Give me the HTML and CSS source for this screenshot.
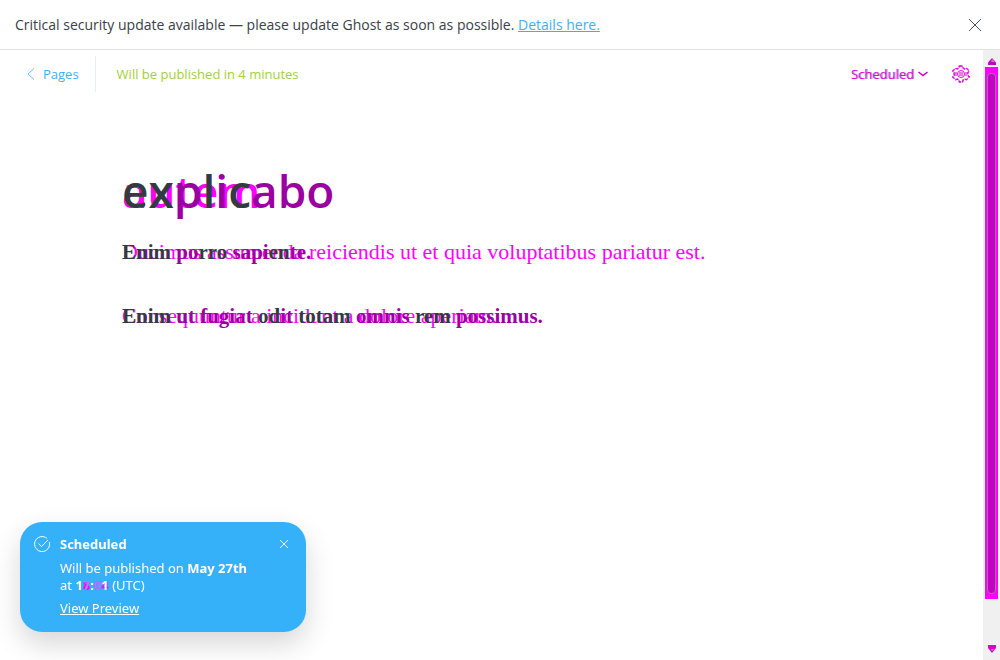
FILE: index.html
```html
<!DOCTYPE html>
<html lang="en">
<head>
<meta charset="utf-8">
<title>Page editor</title>
<link rel="stylesheet" href="styles.css">
</head>
<body>
<div class="alert">
  <p class="alert-text">Critical security update available — please update Ghost as soon as possible. <a href="#details">Details here.</a></p>
  <button class="icon-button" aria-label="Close alert"><svg width="14" height="14" viewBox="0 0 14 14" fill="none" stroke="#4b5257"><path d="M1 1l12 12M13 1L1 13"/></svg></button>
</div>
<div class="workspace">
  <div class="editor">
    <header class="toolbar">
      <a class="back" href="#pages"><svg width="8" height="12" viewBox="0 0 8 12" fill="none" stroke="#62bdea"><path d="M7 .5L1 6l6 5.500"/></svg>Pages</a>
      <span class="status">Will be published in 4 minutes</span>
      <button class="schedule"><span class="stack"><span class="schedule-old">Scheduled</span><span class="schedule-new">Scheduled</span></span><svg width="10" height="6" viewBox="0 0 10 6" fill="none" stroke="#c400c4" stroke-width="1.500"><path d="M.5 1L5 4.500 9.500 1"/></svg></button>
      <button class="icon-button settings" aria-label="Settings"><svg width="18" height="18" viewBox="0 0 18 18" fill="none"><path d="M7.400 1h3.200l.5 2.100 1.400.8 2-.6 2.800 2.800-1.500 1.500v2.800l1.500 1.500-2.800 2.800-2-.6-1.400.8-.5 2.100H7.400l-.5-2.100-1.400-.8-2 .6L.7 11.900l1.500-1.500V7.600L.7 6.100l2.800-2.800 2 .6 1.400-.8z" stroke="#a5a5ad"/><path d="M7.400 1h3.200l.5 2.100 1.400.8 2-.6 2.800 2.800-1.500 1.500v2.800l1.500 1.500-2.800 2.800-2-.6-1.400.8-.5 2.100H7.400l-.5-2.100-1.400-.8-2 .6L.7 11.900l1.500-1.500V7.600L.7 6.100l2.800-2.800 2 .6 1.400-.8z" stroke="#e800e8" stroke-width="1.400" stroke-dasharray="3 1.500"/><circle cx="9" cy="9" r="3.500" stroke="#d800d8"/><path d="M8 7v4M10 7v4M4 7v4M14 7v4" stroke="#c400c4"/></svg></button>
    </header>
    <main class="content">
      <h1 class="title stack"><span class="old">autem</span><span class="new"><span class="shared">ex</span>p<span class="shared">l</span>i<span class="shared">c</span>abo</span></h1>
      <p class="copy stack"><span class="old">Ducimus assumenda reiciendis ut et quia voluptatibus pariatur est.</span><span class="new"><span class="shared">Enim</span> po<span class="shared">rro</span> sapi<span class="shared">en</span>te.</span></p>
      <p class="copy stack"><span class="old">Consequuntur a incidunt a dolore aperiam.</span><span class="new"><span class="shared">Enim</span> ut fugiat <span class="shared">od</span>it <span class="shared">totam</span> omnis <span class="shared">rem</span> possimus.</span></p>
    </main>
  </div>
  <div class="scrollbar" aria-hidden="true">
    <svg class="arrow" width="10" height="8" viewBox="0 0 10 8"><path d="M5 0l4 4.500V7H1V4.500z" fill="#c400c4"/><path d="M5 1l3 3H4z" fill="#9b9b9b"/></svg>
    <div class="track"><div class="thumb"></div></div>
    <svg class="arrow" width="10" height="8" viewBox="0 0 10 8"><path d="M1 0h8v3L5 8 1 3z" fill="#d800d8"/><path d="M4 4h3L5 6z" fill="#9b9b9b"/></svg>
  </div>
</div>
<aside class="toast">
  <svg class="toast-icon" width="16" height="16" viewBox="0 0 16 16" fill="none" stroke="#fff"><path d="M15.300 6A7.500 7.500 0 1 1 13 2.400M4.500 7.500L7.500 10.500 14 4"/></svg>
  <div class="toast-body">
    <strong class="toast-title">Scheduled</strong>
    <p class="toast-text">Will be published on <b>May 27th</b><br>at <b class="time stack"><span class="time-old"><span class="clear">1</span>8<span class="clear">:</span>04</span><span class="time-new">1<span class="mixed">7</span>:<span class="mixed">0</span>1</span></b> (UTC)</p>
    <a class="preview" href="#preview">View Preview</a>
  </div>
  <button class="icon-button" aria-label="Close notification"><svg width="10" height="10" viewBox="0 0 10 10" fill="none" stroke="#fff"><path d="M1 1l8 8M9 1L1 9"/></svg></button>
</aside>
</body>
</html>
```
FILE: styles.css
```css
* { box-sizing: border-box; }
body {
  margin: 0;
  min-height: 100vh;
  display: flex;
  flex-direction: column;
  background: #fff;
  color: #394047;
  font: 13px/18px "Noto Sans", "Open Sans", sans-serif;
}
p, h1 { margin: 0; }
button { border: 0; padding: 0; background: none; font: inherit; cursor: pointer; }
svg { display: block; flex: none; }
.stack { display: grid; justify-items: start; align-items: baseline; }
.stack > * { grid-area: 1 / 1; }
.alert {
  display: flex;
  align-items: center;
  justify-content: space-between;
  height: 50px;
  padding: 0 18px 0 15px;
  border-bottom: 1px solid #dfe1e3;
}
.alert-text { font-family: "Open Sans", "Noto Sans", sans-serif; font-size: 14px; }
.alert-text a { color: #3eb0ef; }
.workspace { flex: 1; display: flex; }
.editor { flex: 1; }
.toolbar {
  display: flex;
  align-items: center;
  height: 48px;
  padding: 0 13px 0 27px;
  font-family: "Open Sans", "Noto Sans", sans-serif;
}
.back {
  display: flex;
  align-items: center;
  gap: 8px;
  height: 36px;
  padding-right: 16px;
  border-right: 1px solid #e5eff5;
  color: #3eb0ef;
  text-decoration: none;
}
.status { margin-left: 21px; color: #a4d037; }
.schedule { display: flex; align-items: center; gap: 3px; margin-left: auto; }
.schedule-old { color: #8ea0b5; padding-left: 1px; }
.schedule-new { color: #e800e8; }
.settings { margin-left: 24px; }
.content { padding: 60px 122px; }
.title { font: 600 46px/64px "Open Sans", "Noto Sans", sans-serif; margin-bottom: 13px; }
.copy { font: 22px/32px "Liberation Serif", serif; margin-bottom: 32px; }
.old { color: #ff00ff; font-weight: 400; }
.title .old { font-weight: 600; font-size: 44px; }
.new { color: #9b00a0; }
.copy .new { font-weight: 700; font-size: 21px; }
.shared { color: #343b40; }
.scrollbar {
  width: 17px;
  padding: 8px 2px 7px;
  display: flex;
  flex-direction: column;
  align-items: center;
  background: #f0f0f0;
}
.track { width: 13px; height: calc(100% - 63px); margin: 1px 0 auto; padding: 6px 2px 5px; background: #ff00ff; }
.thumb { height: 100%; border: 1px solid #9b7b9b; border-radius: 4px; background: #c400c4; }
.toast {
  position: fixed;
  left: 20px;
  bottom: 28px;
  width: 286px;
  display: flex;
  align-items: flex-start;
  gap: 10px;
  padding: 14px 17px 15px 14px;
  border-radius: 22px;
  background: #35b1f9;
  color: #fff;
  box-shadow: 0 12px 28px rgba(0, 0, 0, .16);
}
.toast-body { flex: 1; white-space: nowrap; }
.toast-title { display: block; line-height: 16px; margin-bottom: 8px; }
.toast-text { line-height: 17px; }
.time { display: inline-grid; }
.time-old { color: #ff00ff; }
.mixed { color: #b478fa; }
.clear { color: transparent; }
.preview { display: inline-block; margin-top: 5px; color: #fff; }
.toast .icon-button { margin-top: 3px; }
```
